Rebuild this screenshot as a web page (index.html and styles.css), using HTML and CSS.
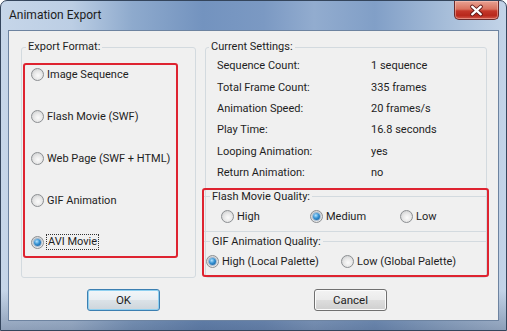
FILE: index.html
```html
<!DOCTYPE html>
<html lang="en">
<head>
<meta charset="utf-8">
<title>Animation Export</title>
<link rel="stylesheet" href="styles.css">
</head>
<body>
<div class="window">
  <div class="titlebar">
    <span class="title">Animation Export</span>
    <span class="close" aria-label="Close">
      <svg width="45" height="19" viewBox="0 0 45 19">
        <path d="M18 5.5 L27 13.5 M27 5.5 L18 13.5" stroke="#5a1414" stroke-width="4.2" stroke-linecap="round" fill="none"/>
        <path d="M18 5.5 L27 13.5 M27 5.5 L18 13.5" stroke="#ffffff" stroke-width="2.4" stroke-linecap="round" fill="none"/>
      </svg>
    </span>
  </div>
  <div class="client">
    <div class="groups">
      <fieldset class="group group-format">
        <legend>Export Format:</legend>
        <div class="mark format-list">
          <label class="radio"><span class="dot"></span>Image Sequence</label>
          <label class="radio"><span class="dot"></span>Flash Movie (SWF)</label>
          <label class="radio"><span class="dot"></span>Web Page (SWF + HTML)</label>
          <label class="radio"><span class="dot"></span>GIF Animation</label>
          <label class="radio"><span class="dot on"></span><span class="focus">AVI Movie</span></label>
        </div>
      </fieldset>
      <fieldset class="group group-settings">
        <legend>Current Settings:</legend>
        <dl class="stats">
          <dt>Sequence Count:</dt><dd>1 sequence</dd>
          <dt>Total Frame Count:</dt><dd>335 frames</dd>
          <dt>Animation Speed:</dt><dd>20 frames/s</dd>
          <dt>Play Time:</dt><dd>16.8 seconds</dd>
          <dt>Looping Animation:</dt><dd>yes</dd>
          <dt>Return Animation:</dt><dd>no</dd>
        </dl>
        <div class="mark quality">
          <fieldset class="sub sub-flash">
            <legend>Flash Movie Quality:</legend>
            <div class="opts opts-flash">
              <label class="radio"><span class="dot"></span>High</label>
              <label class="radio"><span class="dot on"></span>Medium</label>
              <label class="radio"><span class="dot"></span>Low</label>
            </div>
          </fieldset>
          <fieldset class="sub sub-gif">
            <legend>GIF Animation Quality:</legend>
            <div class="opts opts-gif">
              <label class="radio"><span class="dot on"></span>High (Local Palette)</label>
              <label class="radio"><span class="dot"></span>Low (Global Palette)</label>
            </div>
          </fieldset>
        </div>
      </fieldset>
    </div>
    <div class="buttons">
      <button class="btn btn-default btn-ok">OK</button>
      <button class="btn btn-cancel">Cancel</button>
    </div>
  </div>
</div>
</body>
</html>
```

FILE: styles.css
```css
* { box-sizing: border-box; }
html, body { margin: 0; padding: 0; }
body {
  width: 507px;
  height: 331px;
  overflow: hidden;
  background: #ffffff;
  font-family: Roboto, "Noto Sans", sans-serif;
  font-size: 11px;
  color: #1e1e1e;
}

.window {
  width: 507px;
  height: 331px;
  border: 1px solid #34455c;
  border-radius: 7px 7px 0 0;
  padding: 0 7px 9px 7px;
  display: flex;
  flex-direction: column;
  background:
    linear-gradient(180deg, rgba(255,255,255,0) 0%, rgba(255,255,255,0) 88%, rgba(40,60,95,0.35) 100%),
    linear-gradient(90deg, #c6d6e9 0%, #bccee4 14%, #8eaacd 26%, #7393bf 40%, #7b99c3 52%, #92accf 62%, #819fc7 74%, #a6bdd9 88%, #c3d4e8 100%);
}

.titlebar {
  height: 29px;
  display: flex;
  align-items: flex-start;
}
.title {
  padding-left: 1px;
  line-height: 29px;
  font-size: 12px;
  color: #1c1c1c;
}
.close {
  margin-left: auto;
  width: 45px;
  height: 19px;
  border: 1px solid #6b2a2a;
  border-top: none;
  border-radius: 0 0 5px 5px;
  background: linear-gradient(180deg, #e8a293 0%, #d9725f 45%, #c4372a 55%, #b8281c 80%, #d2574a 100%);
  box-shadow: inset 0 0 0 1px rgba(255,210,200,0.45);
  display: flex;
}

.client {
  flex: 1;
  background: #f0f0f0;
  border: 1px solid #6d83a0;
  padding: 8px 12px 0 12px;
}

.groups {
  display: grid;
  grid-template-columns: 175px 282px;
  column-gap: 9px;
}

.group {
  margin: 0;
  padding: 0;
  min-width: 0;
  border: 1px solid #d3dadf;
  border-radius: 3px;
}
.group > legend {
  margin-left: 4px;
  padding: 0 2px;
  line-height: 16px;
}
.group-settings > legend { margin-left: 3px; }

.mark {
  border: 2px solid #de2330;
  border-radius: 3px;
}

.format-list {
  margin: 8px 0 19px 1px;
  width: 155px;
  height: 195px;
  padding: 1px 0 0 6px;
  display: flex;
  flex-direction: column;
  gap: 26px;
}

.radio {
  display: flex;
  align-items: center;
  gap: 3px;
  height: 16px;
  white-space: nowrap;
}
.dot {
  position: relative;
  flex: none;
  width: 13px;
  height: 13px;
  border-radius: 50%;
  border: 1px solid #8c8f92;
  background: radial-gradient(circle at 55% 60%, #fbfbfb 0%, #e8e8e8 45%, #c4c6c8 100%);
}
.dot.on::after {
  content: "";
  position: absolute;
  left: 2px;
  top: 2px;
  width: 7px;
  height: 7px;
  border-radius: 50%;
  background: radial-gradient(circle at 40% 35%, #b5e4ff 0%, #3592d3 45%, #0f4d8c 100%);
  box-shadow: 0 0 0 1px rgba(40,100,160,0.35);
}
.focus {
  outline: 1px dotted #333;
  outline-offset: 0;
  padding: 0 1px;
  line-height: 14px;
}

.stats {
  margin: 0;
  padding-left: 11px;
  display: grid;
  grid-template-columns: 154px auto;
  grid-auto-rows: 21.4px;
  align-items: center;
}
.stats dt, .stats dd { margin: 0; }

.quality {
  margin: 4.6px -3px 0 -4px;
  height: 89px;
}

.sub {
  margin: 0;
  padding: 0;
  min-width: 0;
  border: none;
  border-top: 1px solid #d3dadf;
}
.sub > legend {
  margin-left: 6px;
  padding: 0 2px;
  line-height: 14px;
}
.sub-flash {
  border-bottom: 1px solid #d3dadf;
  padding: 5px 0 6px 0;
}
.sub-gif {
  margin-top: 3px;
  padding: 5px 0 5px 0;
}

.opts { display: grid; }
.opts-flash {
  padding-left: 17px;
  grid-template-columns: 89px 90px auto;
}
.opts-gif {
  padding-left: 2px;
  grid-template-columns: 135px auto;
}

.buttons {
  display: flex;
  margin-top: 11px;
}
.btn {
  width: 73px;
  height: 22px;
  padding: 0;
  border: 1px solid #707070;
  border-radius: 3px;
  font: inherit;
  font-size: 11.5px;
  color: #1e1e1e;
  background: linear-gradient(180deg, #f3f3f3 0%, #ebebeb 48%, #dddddd 52%, #cfcfcf 100%);
  box-shadow: inset 0 0 0 1px #fbfbfb;
}
.btn-default {
  border-color: #3c7fb1;
  box-shadow: inset 0 0 0 1px #8fd0f0;
  background: linear-gradient(180deg, #f2f6f9 0%, #e9eef2 48%, #dbe2e7 52%, #cdd5db 100%);
}
.btn-ok { margin-left: 66px; }
.btn-cancel { margin-left: 154px; }
```
